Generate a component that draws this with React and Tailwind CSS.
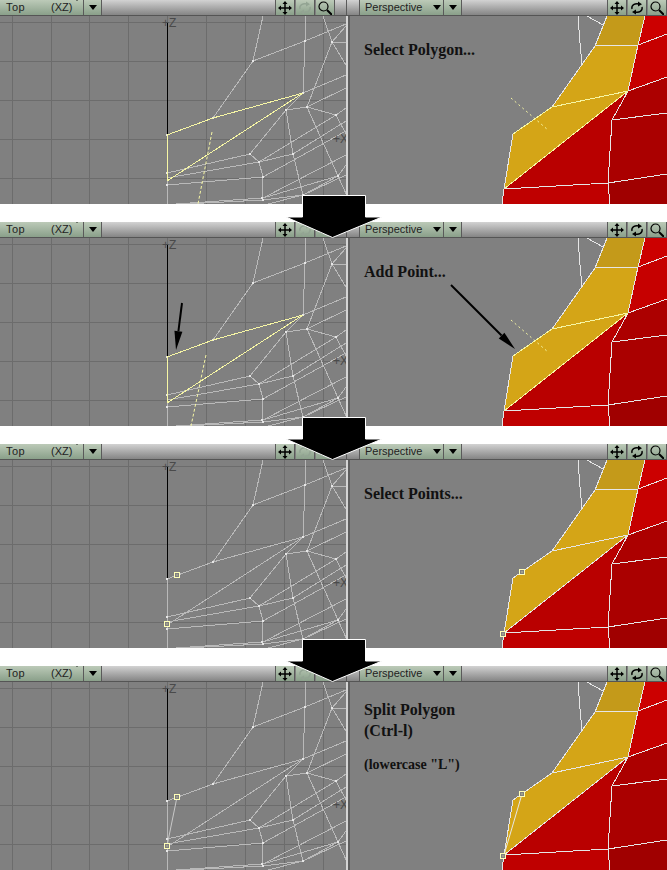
const WIRES = [
  "263,16 253,61 213,118",
  "253,61 305,41 346,24",
  "305,16 305,41 303,93",
  "323,16 332,42 346,65",
  "332,42 346,43",
  "332,42 346,26",
  "332,42 307,107",
  "303,93 346,75",
  "250,154 286,110 303,93",
  "286,110 307,107 336,115 346,134",
  "307,107 346,88",
  "336,115 346,108",
  "307,107 338,176 347,196",
  "286,110 293,154 303,195",
  "250,154 259,162 263,177 262,198",
  "250,154 167,173",
  "259,162 167,178",
  "263,177 167,185",
  "259,162 293,154 346,121",
  "259,162 336,115",
  "263,177 346,131",
  "263,198 338,176 346,165",
  "263,198 346,155",
  "176,204 262,198",
  "185,204 263,200",
  "263,200 303,195 346,175",
  "268,204 303,195",
  "303,195 338,176",
]

const DOTS = [
  [253, 61], [305, 41], [332, 42], [303, 93], [286, 110], [307, 107], [336, 115], [213, 118],
  [250, 154], [259, 162], [293, 154], [263, 177], [338, 176], [262, 198], [263, 200], [303, 195],
  [167, 135], [167, 173], [167, 185],
]

const GRID_X = [12, 51, 89, 128, 167, 206, 245, 284, 323]
const GRID_Y = [22, 61, 100, 139, 178]

const SHADED = [
  { points: "607,16 645,16 638,45 595,46", fill: "#c49a1a" },
  { points: "595,46 638,45 628,91 552,107", fill: "#d4a517" },
  { points: "552,107 628,91 504,189 513,134", fill: "#d4a517" },
  { points: "645,16 667,16 667,34 638,45", fill: "#cc0000" },
  { points: "638,45 667,34 667,77 628,91", fill: "#c60000" },
  { points: "628,91 667,77 667,113 612,120", fill: "#ac0000" },
  { points: "628,91 612,120 608,183 504,189", fill: "#b90000" },
  { points: "612,120 667,113 667,174 608,183", fill: "#aa0000" },
  { points: "504,189 608,183 610,204 502,204", fill: "#bf0000" },
  { points: "608,183 667,174 667,204 610,204", fill: "#a00000" },
]

const EDGES = [
  "578,16 580,43 582,65",
  "587,16 603,25",
  "607,16 595,46 552,107 513,134 504,189 502,204",
  "645,16 638,45 628,91 504,189",
  "595,46 638,45 667,34",
  "552,107 628,91 667,77",
  "628,91 612,120 608,183 610,204",
  "612,120 667,113",
  "504,189 608,183 667,174",
]

const STEPS = [
  { dashLeft: "212,132 198,204", dashRight: true, yellow: true },
  { dashLeft: "206,133 191,204", dashRight: true, yellow: true, pointers: true },
  { squares: true },
  { squares: true, split: true },
]

const Square = ({ x, y }) => (
  <g>
    <rect x={x - 2.5} y={y - 2.5} width="5" height="5" fill="#808080" stroke="#ffffb8" />
    <rect x={x - 0.5} y={y - 0.5} width="1" height="1" fill="#ffffb8" />
  </g>
)

const Pointer = ({ x1, y1, x2, y2 }) => {
  const dx = x2 - x1
  const dy = y2 - y1
  const len = Math.hypot(dx, dy)
  const ux = dx / len
  const uy = dy / len
  const bx = x2 - ux * 19
  const by = y2 - uy * 19
  return (
    <g>
      <line x1={x1} y1={y1} x2={bx} y2={by} stroke="#000" strokeWidth="2" />
      <polygon points={`${x2},${y2} ${bx - uy * 4},${by + ux * 4} ${bx + uy * 4},${by - ux * 4}`} fill="#000" />
    </g>
  )
}

const TopView = ({ step }) => (
  <svg viewBox="0 16 346 188" className="block w-[346px] h-[188px]">
    {GRID_X.map((x) => (
      <rect key={x} x={x} y="16" width="1" height="188" fill="#6c6c6c" />
    ))}
    {GRID_Y.map((y) => (
      <rect key={y} x="0" y={y} width="346" height="1" fill="#6c6c6c" />
    ))}
    <g fill="none" stroke="#b9b9b9" shapeRendering="crispEdges">
      {WIRES.map((w) => (
        <polyline key={w} points={w} />
      ))}
      <polyline points="167,135 213,118 303,93" />
      <polyline points="167,181 303,93" />
      <line x1="167.5" y1="135" x2="167.5" y2="204" />
    </g>
    <rect x="167" y="22" width="1" height="113" fill="#000" />
    <text x="162" y="27" fontSize="12" fill="#4a4a4a" fontFamily="Liberation Sans, sans-serif">+Z</text>
    <text x="333" y="143" fontSize="12" fill="#4a4a4a" fontFamily="Liberation Sans, sans-serif">+X</text>
    {DOTS.map(([x, y]) => (
      <rect key={`${x}-${y}`} x={x - 1} y={y - 1} width="2" height="2" fill="#e6e6e6" />
    ))}
    {step.yellow && (
      <g fill="none" stroke="#f6f6a4" shapeRendering="crispEdges">
        <polygon points="167,135 213,118 303,93 167,181" />
      </g>
    )}
    {step.dashLeft && <polyline points={step.dashLeft} fill="none" stroke="#f6f6a4" strokeDasharray="3 2" />}
    {step.split && <line x1="177" y1="131" x2="167" y2="180" stroke="#c8c8c8" />}
    {step.squares && (
      <g>
        <Square x={177} y={131} />
        <Square x={167} y={180} />
      </g>
    )}
    {step.pointers && <Pointer x1={182} y1={81} x2={176} y2={128} />}
  </svg>
)

const PerspectiveView = ({ step }) => (
  <svg viewBox="350 16 317 188" className="absolute inset-0 w-[317px] h-[188px]">
    {SHADED.map((s) => (
      <polygon key={s.points} points={s.points} fill={s.fill} />
    ))}
    <g fill="none" stroke="#e6e6e6" shapeRendering="crispEdges">
      {EDGES.map((e) => (
        <polyline key={e} points={e} />
      ))}
    </g>
    {step.yellow && (
      <polyline points="513,134 552,107 628,91 504,189" fill="none" stroke="#f6f6a4" shapeRendering="crispEdges" />
    )}
    {step.dashRight && <line x1="511" y1="98" x2="548" y2="130" stroke="#f6f6a4" strokeDasharray="2 3" />}
    {step.split && <polyline points="522,128 504,189" fill="none" stroke="#e6e6e6" />}
    {step.squares && (
      <g>
        <Square x={522} y={128} />
        <Square x={503} y={190} />
      </g>
    )}
    {step.pointers && <Pointer x1={451} y1={63} x2={515} y2={127} />}
  </svg>
)

const MoveIcon = () => (
  <svg viewBox="0 0 14 14" className="w-[14px] h-[14px]">
    <path d="M7 1v12M1 7h12" stroke="#000" strokeWidth="1.5" />
    <path d="M7 0l2.5 3h-5zM7 14l2.5-3h-5zM0 7l3-2.5v5zM14 7l-3-2.5v5z" fill="#000" />
  </svg>
)

const RotateIcon = ({ faded }) => (
  <svg viewBox="0 0 14 14" className="w-[14px] h-[14px]">
    <g stroke={faded ? "#93a493" : "#000"} fill="none" strokeWidth="1.4">
      <path d="M2 8C1 4 5 2 9 3" />
      <path d="M12 6c1 4-3 6-7 5" />
    </g>
    <path d="M8 0.5l4 2.7-4 2.3zM6 8.5l-4 2.4 4 2.6z" fill={faded ? "#93a493" : "#000"} />
  </svg>
)

const ZoomIcon = () => (
  <svg viewBox="0 0 14 14" className="w-[14px] h-[14px]">
    <circle cx="5.5" cy="5.5" r="4.5" fill="none" stroke="#000" strokeWidth="1.2" />
    <path d="M9 9l5 5" stroke="#000" strokeWidth="2" />
  </svg>
)

const Caret = () => <span className="w-0 h-0 border-x-[4px] border-x-transparent border-t-[5px] border-t-black" />

const GREEN = "bg-linear-to-b from-[#bccab8] to-[#8aa08a]"
const STRIP = "bg-linear-to-b from-[#d2d2d2] to-[#858585]"

const IconButton = ({ children }) => (
  <div className={`w-[19px] flex items-center justify-center border-r border-[#5a5a5a] ${GREEN}`}>{children}</div>
)

const LeftBar = () => (
  <div className="flex h-[16px] border-b border-[#555] text-[11px] leading-none text-[#222]">
    <div className={`w-[84px] flex items-center pl-[6px] border-r border-[#5a5a5a] ${GREEN}`}>
      <span className="w-[45px] tracking-[0.4px]">Top</span>
      <span>(XZ)</span>
      <span className="ml-[1px]"><Caret /></span>
    </div>
    <div className={`w-[18px] flex items-center justify-center border-r border-[#5a5a5a] ${GREEN}`}>
      <Caret />
    </div>
    <div className={`flex-1 border-r border-[#5a5a5a] ${STRIP}`} />
    <IconButton><MoveIcon /></IconButton>
    <div className="w-[1px]" />
    <IconButton><RotateIcon faded /></IconButton>
    <div className="w-[1px]" />
    <IconButton><ZoomIcon /></IconButton>
    <div className={`w-[11px] ${STRIP}`} />
  </div>
)

const RightBar = () => (
  <div className="flex h-[16px] border-b border-[#555] text-[11px] leading-none text-[#222]">
    <div className={`w-[14px] border-x border-[#5a5a5a] ${STRIP}`} />
    <div className={`w-[84px] flex items-center pl-[5px] border-r border-[#5a5a5a] ${GREEN}`}>
      <span className="w-[68px]">Perspective</span>
      <Caret />
    </div>
    <div className={`w-[18px] flex items-center justify-center border-r border-[#5a5a5a] ${GREEN}`}>
      <Caret />
    </div>
    <div className={`flex-1 border-r border-[#5a5a5a] ${STRIP}`} />
    <IconButton><MoveIcon /></IconButton>
    <div className="w-[1px]" />
    <IconButton><RotateIcon /></IconButton>
    <div className="w-[1px]" />
    <IconButton><ZoomIcon /></IconButton>
  </div>
)

const Caption = ({ index }) => {
  if (index === 3) {
    return (
      <div className="font-bold text-[#111] text-[16px] leading-[21px]">
        <div className="mt-[17px]">Split Polygon</div>
        <div>(Ctrl-l)</div>
        <div className="mt-[14px] text-[14px] leading-[19px]">(lowercase "L")</div>
      </div>
    )
  }
  const text = ["Select Polygon...", "Add Point...", "Select Points..."][index]
  return <div className="mt-[23px] font-bold text-[#111] text-[16px] leading-[21px]">{text}</div>
}

const Arrow = () => (
  <svg viewBox="0 0 98 43" className="absolute left-[285px] top-[-9px] w-[98px] h-[43px]">
    <polygon
      points="17.5,0.5 80.5,0.5 80.5,22 97,22 47.5,42.5 1,22 17.5,22"
      fill="#000"
      stroke="#fff"
    />
  </svg>
)

const Panel = ({ step, index }) => (
  <div className="h-[204px] flex bg-[#808080]">
    <div className="w-[346px] flex flex-col shrink-0">
      <LeftBar />
      <TopView step={step} />
    </div>
    <div className="flex flex-col flex-1 min-w-0">
      <RightBarRow index={index} step={step} />
    </div>
  </div>
)

const RightBarRow = ({ index, step }) => (
  <>
    <RightBar />
    <div className="flex flex-1">
      <div className="w-[2px] bg-[#d4d4d4]" />
      <div className="w-[2px] bg-[#5e5e5e]" />
      <div className="relative flex-1 pl-[14px] font-['Liberation_Serif',serif]">
        <PerspectiveView step={step} />
        <div className="relative">
          <Caption index={index} />
        </div>
      </div>
    </div>
  </>
)

export default function App() {
  return (
    <div className="w-[667px] h-[870px] bg-white font-['Liberation_Sans',sans-serif] overflow-hidden">
      {STEPS.map((step, i) => (
        <div key={i}>
          <Panel step={step} index={i} />
          {i < 3 && (
            <div className="relative z-10 h-[18px] bg-white">
              <Arrow />
            </div>
          )}
        </div>
      ))}
    </div>
  )
}
